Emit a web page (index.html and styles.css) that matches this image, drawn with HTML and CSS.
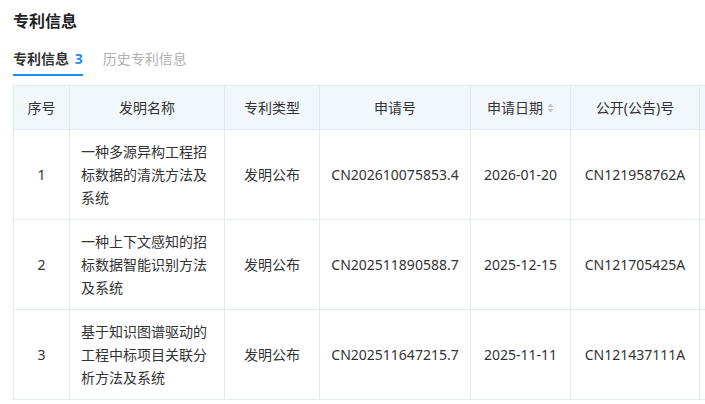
FILE: index.html
```html
<!DOCTYPE html>
<html lang="zh-CN">
<head>
<meta charset="utf-8">
<link rel="stylesheet" href="styles.css">
</head>
<body>
<div class="page">
  <h1 class="title">专利信息</h1>
  <div class="tabs">
    <div class="tab active">专利信息 <span class="count">3</span></div>
    <div class="tab">历史专利信息</div>
  </div>
  <div class="table-wrap">
    <table class="grid">
      <colgroup>
        <col class="c1"><col class="c2"><col class="c3"><col class="c4"><col class="c5"><col class="c6"><col class="c7">
      </colgroup>
      <thead>
        <tr>
          <th>序号</th>
          <th>发明名称</th>
          <th>专利类型</th>
          <th>申请号</th>
          <th><span class="sortable">申请日期<svg class="sort" width="7" height="10" viewBox="0 0 7 10"><path d="M3.5 0.5L6.5 4H0.5Z" fill="#bfbfbf"/><path d="M3.5 9.5L6.5 6H0.5Z" fill="#bfbfbf"/></svg></span></th>
          <th>公开(公告)号</th>
          <th></th>
        </tr>
      </thead>
      <tbody>
        <tr>
          <td>1</td>
          <td class="name"><div>一种多源异构工程招标数据的清洗方法及系统</div></td>
          <td>发明公布</td>
          <td>CN202610075853.4</td>
          <td>2026-01-20</td>
          <td>CN121958762A</td>
          <td></td>
        </tr>
        <tr>
          <td>2</td>
          <td class="name"><div>一种上下文感知的招标数据智能识别方法及系统</div></td>
          <td>发明公布</td>
          <td>CN202511890588.7</td>
          <td>2025-12-15</td>
          <td>CN121705425A</td>
          <td></td>
        </tr>
        <tr>
          <td>3</td>
          <td class="name"><div>基于知识图谱驱动的工程中标项目关联分析方法及系统</div></td>
          <td>发明公布</td>
          <td>CN202511647215.7</td>
          <td>2025-11-11</td>
          <td>CN121437111A</td>
          <td></td>
        </tr>
      </tbody>
    </table>
  </div>
</div>
</body>
</html>
```
FILE: styles.css
```css
html, body {
  margin: 0;
  padding: 0;
  background: #fff;
}
body {
  font-family: "Noto Sans", "Noto Sans CJK SC", sans-serif;
  color: #333;
  width: 705px;
  height: 404px;
  overflow: hidden;
}
.page {
  padding: 10px 0 0 13px;
}
.title {
  margin: 0;
  font-size: 16px;
  line-height: 22px;
  font-weight: bold;
  color: #222;
}
.tabs {
  display: flex;
  gap: 20px;
  margin-top: 16px;
}
.tab {
  font-size: 14px;
  line-height: 22px;
  padding-bottom: 4px;
  border-bottom: 2px solid transparent;
  color: #b0b0b0;
}
.tab.active {
  color: #333;
  font-weight: bold;
  border-bottom-color: #1a8cff;
}
.count {
  color: #1a8cff;
  margin-left: 2px;
}
.table-wrap {
  margin-top: 9px;
  width: 692px;
  overflow: hidden;
}
.grid {
  border-collapse: collapse;
  table-layout: fixed;
  width: 816px;
  font-size: 14px;
}
.c1 { width: 56px; }
.c2 { width: 155px; }
.c3 { width: 95px; }
.c4 { width: 151px; }
.c5 { width: 100px; }
.c6 { width: 129px; }
.c7 { width: 130px; }
.grid th, .grid td {
  border: 1px solid #e3ebf2;
  text-align: center;
  vertical-align: middle;
  padding: 10px 0;
  line-height: 23px;
  white-space: nowrap;
}
.grid th {
  background: #f2f7fb;
  font-weight: normal;
  height: 23px;
  color: #333;
}
.grid td {
  height: 69px;
}
.grid td.name {
  text-align: left;
  white-space: normal;
  padding-left: 11px;
}
.grid td.name div {
  width: 128px;
}
.sortable {
  display: inline-flex;
  align-items: center;
  gap: 4px;
}
.sort {
  display: block;
}
```
